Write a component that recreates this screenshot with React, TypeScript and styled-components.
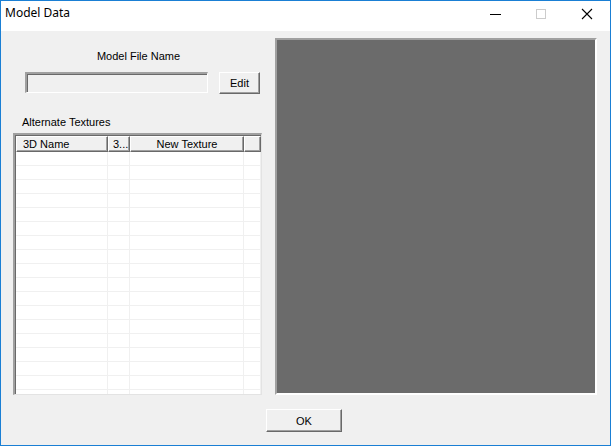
import React from "react";
import styled, { createGlobalStyle } from "styled-components";

const Global = createGlobalStyle`
  html, body { margin: 0; padding: 0; background: #ffffff; }
  * { box-sizing: border-box; }
`;

const Window = styled.div`
  width: 611px;
  height: 446px;
  border: 1px solid #1a7fd4;
  border-top: none;
  display: flex;
  flex-direction: column;
  font-family: "Liberation Sans", Arial, sans-serif;
  font-size: 11px;
  color: #000;
  background: #f0f0f0;
`;

const TitleBar = styled.div`
  height: 31px;
  background: #ffffff;
  display: flex;
  align-items: center;
  border-top: 1px solid #1a7fd4;
`;

const Title = styled.div`
  flex: 1;
  padding-left: 4px;
  font-family: "Noto Sans", "Segoe UI", sans-serif;
  font-size: 12px;
  margin-top: -7px;
`;

const CaptionButton = styled.div`
  width: 46px;
  height: 30px;
  display: flex;
  align-items: center;
  justify-content: center;
  margin-top: -4px;
`;

const Body = styled.div`
  flex: 1;
  display: flex;
  flex-direction: column;
  padding: 7px 13px 12px 12px;
`;

const Main = styled.div`
  display: flex;
  gap: 13px;
  height: 357px;
`;

const LeftColumn = styled.div`
  width: 249px;
  display: flex;
  flex-direction: column;
`;

const CenterLabel = styled.div`
  text-align: center;
  margin-top: 11px;
  line-height: 14px;
  padding-left: 2px;
`;

const FileRow = styled.div`
  display: flex;
  align-items: flex-start;
  margin-top: 9px;
  padding-left: 12px;
  gap: 11px;
`;

const FileField = styled.div`
  width: 183px;
  height: 21px;
  background: #f0f0f0;
  border-top: 2px solid #a0a0a0;
  border-left: 2px solid #a0a0a0;
  border-bottom: 1px solid #ffffff;
  border-right: 1px solid #ffffff;
  box-shadow: inset 1px 1px 0 #696969;
`;

const Button = styled.div<{ $w: number; $h: number }>`
  width: ${(p) => p.$w}px;
  height: ${(p) => p.$h}px;
  display: flex;
  align-items: center;
  justify-content: center;
  background: #f0f0f0;
  border-top: 1px solid #ffffff;
  border-left: 1px solid #ffffff;
  border-right: 1px solid #696969;
  border-bottom: 1px solid #696969;
  box-shadow: inset -1px -1px 0 #a0a0a0;
  font-size: 11px;
`;

const SectionLabel = styled.div`
  margin-top: 21px;
  padding-left: 9px;
  line-height: 14px;
`;

const Table = styled.div`
  margin-top: 4px;
  flex: 1;
  background: #ffffff;
  border-top: 2px solid #a0a0a0;
  border-left: 2px solid #a0a0a0;
  border-bottom: 1px solid #e3e3e3;
  border-right: 1px solid #e3e3e3;
  box-shadow: inset 1px 1px 0 #696969;
  display: flex;
  flex-direction: column;
  overflow: hidden;
`;

const cols = "92px 22px 114px 1fr";

const HeaderRow = styled.div`
  display: grid;
  grid-template-columns: ${cols};
  flex: none;
  height: 16px;
  margin-left: 1px;
  margin-top: 1px;
`;

const HeaderCell = styled.div<{ $align?: string; $pad?: number }>`
  background: #f0f0f0;
  border-top: 1px solid #ffffff;
  border-left: 1px solid #ffffff;
  border-right: 1px solid #696969;
  border-bottom: 1px solid #696969;
  box-shadow: inset -1px -1px 0 #a0a0a0;
  text-align: ${(p) => p.$align || "left"};
  padding-left: ${(p) => (p.$pad ?? 6)}px;
  line-height: 14px;
  font-size: 11px;
  white-space: nowrap;
  overflow: hidden;
`;

const Row = styled.div`
  display: grid;
  flex: none;
  grid-template-columns: ${cols};
  height: 14px;
  margin-left: 1px;
  border-bottom: 1px solid #f0f0f0;
`;

const Cell = styled.div`
  border-right: 1px solid #f0f0f0;
`;

const Preview = styled.div`
  flex: 1;
  background: #6b6b6b;
  border-top: 2px solid #a0a0a0;
  border-left: 2px solid #a0a0a0;
  border-right: 2px solid #ffffff;
  border-bottom: 2px solid #ffffff;
`;

const Footer = styled.div`
  display: flex;
  justify-content: center;
  margin-top: 14px;
  padding-right: 2px;
`;

export default function App() {
  const rows = Array.from({ length: 18 });
  return (
    <>
      <Global />
      <Window>
        <TitleBar>
          <Title>Model Data</Title>
          <CaptionButton>
            <svg width="12" height="12" viewBox="0 0 12 12">
              <line x1="1" y1="6.5" x2="12" y2="6.5" stroke="#000" strokeWidth="1" />
            </svg>
          </CaptionButton>
          <CaptionButton>
            <svg width="12" height="12" viewBox="0 0 12 12">
              <rect x="1.5" y="1.5" width="9" height="9" fill="none" stroke="#cccccc" strokeWidth="1" />
            </svg>
          </CaptionButton>
          <CaptionButton>
            <svg width="12" height="12" viewBox="0 0 12 12">
              <path d="M1 1 L11 11 M11 1 L1 11" stroke="#000" strokeWidth="1.1" />
            </svg>
          </CaptionButton>
        </TitleBar>
        <Body>
          <Main>
            <LeftColumn>
              <CenterLabel>Model File Name</CenterLabel>
              <FileRow>
                <FileField />
                <Button $w={41} $h={22}>Edit</Button>
              </FileRow>
              <SectionLabel>Alternate Textures</SectionLabel>
              <Table>
                <HeaderRow>
                  <HeaderCell>3D Name</HeaderCell>
                  <HeaderCell $pad={4}>3...</HeaderCell>
                  <HeaderCell $align="center" $pad={0}>New Texture</HeaderCell>
                  <HeaderCell />
                </HeaderRow>
                {rows.map((_, i) => (
                  <Row key={i}>
                    <Cell />
                    <Cell />
                    <Cell />
                    <Cell />
                  </Row>
                ))}
              </Table>
            </LeftColumn>
            <Preview />
          </Main>
          <Footer>
            <Button $w={76} $h={23}>OK</Button>
          </Footer>
        </Body>
      </Window>
    </>
  );
}
